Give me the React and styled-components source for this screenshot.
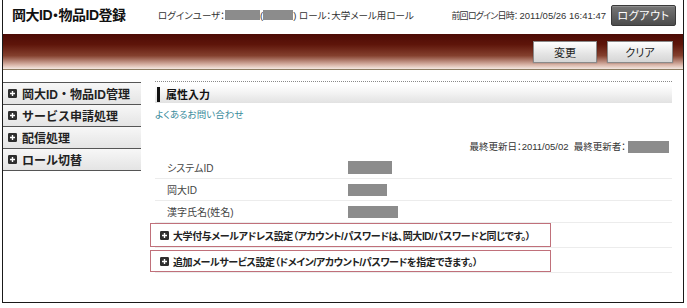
import React from "react";
import styled, { createGlobalStyle } from "styled-components";

const Global = createGlobalStyle`
  html, body { margin: 0; padding: 0; background: #fff; }
  body { font-family: "Liberation Sans", "Noto Sans CJK JP", sans-serif; color: #222; }
`;

const Frame = styled.div`
  margin: 0 3px 0 2px;
  height: 303px;
  box-sizing: border-box;
  border-left: 1px solid #1a1a1a;
  border-right: 1px solid #1a1a1a;
  border-bottom: 1px solid #1a1a1a;
  display: flex;
  flex-direction: column;
  overflow: hidden;
`;

const Header = styled.header`
  height: 34px;
  display: flex;
  align-items: center;
  padding: 0 7px 4px 9px;
  box-sizing: border-box;
`;

const Title = styled.h1`
  margin: 0;
  width: 146px;
  align-self: flex-start;
  padding-top: 4px;
  font-size: 14px;
  font-weight: bold;
  font-feature-settings: "palt";
  color: #111;
  letter-spacing: -0.5px;
  white-space: nowrap;
`;

const Info = styled.div`
  font-size: 9.5px;
  font-feature-settings: "palt";
  color: #333;
  display: flex;
  align-items: center;
  white-space: nowrap;
`;

const Mask = styled.span`
  display: inline-block;
  flex-shrink: 0;
  width: ${(p) => p.$w}px;
  height: ${(p) => p.$h || 10}px;
  background: #8c8c8c;
`;

const LastLogin = styled(Info)`
  margin-left: auto;
  margin-right: 5px;
`;

const Tight = styled.span`
  font-size: 9px;
  letter-spacing: -0.8px;
  margin-right: 2px;
`;

const LogoutButton = styled.button`
  width: 65px;
  height: 21px;
  border: 1px solid #3a3a3a;
  border-radius: 2px;
  background: linear-gradient(#767676, #4c4c4c);
  color: #fff;
  font-family: inherit;
  font-size: 11px;
  font-feature-settings: "palt";
  letter-spacing: 0.6px;
  padding: 0;
  box-shadow: inset 0 1px 0 rgba(255,255,255,0.2);
`;

const Band = styled.div`
  height: 36px;
  background: linear-gradient(#4c0b05 0%, #5e150a 30%, #84402e 62%, #d9b5a8 88%, #f4e8e2 100%);
  border-bottom: 1px solid #8e7e63;
  display: flex;
  justify-content: flex-end;
  align-items: flex-start;
  gap: 10px;
  padding: 7px 10px 0 0;
  box-sizing: border-box;
`;

const ActionButton = styled.button`
  width: ${(p) => p.$w}px;
  height: 22px;
  border: 1px solid #8a8a8a;
  background: linear-gradient(#ffffff, #e4e4e4 60%, #d6d6d6);
  color: #222;
  font-family: inherit;
  font-size: 11px;
  font-feature-settings: "palt";
  padding: 0;
  box-shadow: 0 0 1px rgba(0,0,0,0.3);
`;

const Body = styled.div`
  display: flex;
  flex: 1;
`;

const Sidebar = styled.nav`
  width: 138px;
  margin-top: 12px;
  border-bottom: 1px solid #555;
  align-self: flex-start;
`;

const NavItem = styled.div`
  height: 21px;
  border-top: 1px solid #555;
  background: linear-gradient(#f7f7f7, #e4e4e4);
  display: flex;
  align-items: center;
  padding-left: 5px;
  gap: 5px;
  font-size: 12px;
  font-weight: bold;
  color: #222;
  white-space: nowrap;
`;

const PlusSvg = styled.svg`
  flex-shrink: 0;
`;

const PlusIcon = () => (
  <PlusSvg width="9" height="9" viewBox="0 0 9 9" aria-hidden="true">
    <rect x="0" y="0" width="9" height="9" rx="1.2" fill="#2e2e2e" />
    <path d="M2 4.5H7M4.5 2V7" stroke="#fff" strokeWidth="1.4" />
  </PlusSvg>
);

const Main = styled.main`
  flex: 1;
  margin: 11px 11px 0 14px;
  display: flex;
  flex-direction: column;
`;

const Dotted = styled.div`
  border-top: 1px dotted #8a8a8a;
  margin-bottom: 3px;
`;

const Heading = styled.h2`
  margin: 0;
  height: 18px;
  display: flex;
  align-items: center;
  padding-left: 2px;
  background: linear-gradient(#ffffff, #f1f1f1 50%, #e2e2e2);
  font-size: 11px;
  font-weight: bold;
  color: #111;
  &::before {
    content: "";
    width: 3px;
    height: 15px;
    background: #111;
    margin-right: 6px;
  }
`;

const Link = styled.a`
  margin-top: 4px;
  font-size: 9.5px;
  font-feature-settings: "palt";
  color: #3a8c9c;
  text-decoration: none;
  line-height: 16px;
`;

const Updated = styled.div`
  margin-top: 16px;
  align-self: flex-end;
  margin-right: 3px;
  display: flex;
  align-items: center;
  gap: 2px;
  font-size: 9.5px;
  font-feature-settings: "palt";
  color: #333;
  line-height: 16px;
`;

const Rows = styled.div`
  margin-top: 2px;
  display: flex;
  flex-direction: column;
`;

const Row = styled.div`
  height: 21px;
  border-bottom: 1px solid #ececec;
  display: flex;
  align-items: center;
  padding-left: 12px;
  font-size: 10px;
  font-feature-settings: "palt";
  color: #444;
`;

const Label = styled.span`
  width: 181px;
`;

const BoxRow = styled.div`
  height: ${(p) => p.$h}px;
  border-bottom: 1px solid #ececec;
  display: flex;
  align-items: stretch;
  margin-top: ${(p) => p.$mt || 0}px;
`;

const LinkBox = styled.div`
  width: 401px;
  margin-left: -5px;
  box-sizing: border-box;
  border: 1px solid #c0707a;
  background: #fff;
  display: flex;
  align-items: center;
  gap: 4px;
  padding-left: 9px;
  font-size: 10px;
  letter-spacing: -0.4px;
  font-weight: bold;
  font-feature-settings: "palt";
  color: #222;
  white-space: nowrap;
`;

export default function App() {
  return (
    <>
      <Global />
      <Frame>
        <Header>
          <Title>岡大ID・物品ID登録</Title>
          <Info>
            ログインユーザ：<Mask $w={35} />(<Mask $w={30} />)&nbsp;ロール：大学メール用ロール
          </Info>
          <LastLogin>
            <Tight>前回ログイン日時：</Tight>2011/05/26 16:41:47
          </LastLogin>
          <LogoutButton>ログアウト</LogoutButton>
        </Header>
        <Band>
          <ActionButton $w={64}>変更</ActionButton>
          <ActionButton $w={66}>クリア</ActionButton>
        </Band>
        <Body>
          <Sidebar>
            {["岡大ID・物品ID管理", "サービス申請処理", "配信処理", "ロール切替"].map((t) => (
              <NavItem key={t}>
                <PlusIcon />
                {t}
              </NavItem>
            ))}
          </Sidebar>
          <Main>
            <Dotted />
            <Heading>属性入力</Heading>
            <Link href="#">よくあるお問い合わせ</Link>
            <Updated>
              最終更新日：2011/05/02&nbsp;&nbsp;最終更新者：<Mask $w={41} $h={12} />
            </Updated>
            <Rows>
              <Row>
                <Label>システムID</Label>
                <Mask $w={44} $h={13} />
              </Row>
              <Row>
                <Label>岡大ID</Label>
                <Mask $w={39} $h={12} />
              </Row>
              <Row>
                <Label>漢字氏名(姓名)</Label>
                <Mask $w={50} $h={12} />
              </Row>
              <BoxRow $h={24}>
                <LinkBox>
                  <PlusIcon />
                  大学付与メールアドレス設定（アカウント/パスワードは、岡大ID/パスワードと同じです。）
                </LinkBox>
              </BoxRow>
              <BoxRow $h={22} $mt={2}>
                <LinkBox>
                  <PlusIcon />
                  追加メールサービス設定（ドメイン/アカウント/パスワードを指定できます。）
                </LinkBox>
              </BoxRow>
            </Rows>
          </Main>
        </Body>
      </Frame>
    </>
  );
}
